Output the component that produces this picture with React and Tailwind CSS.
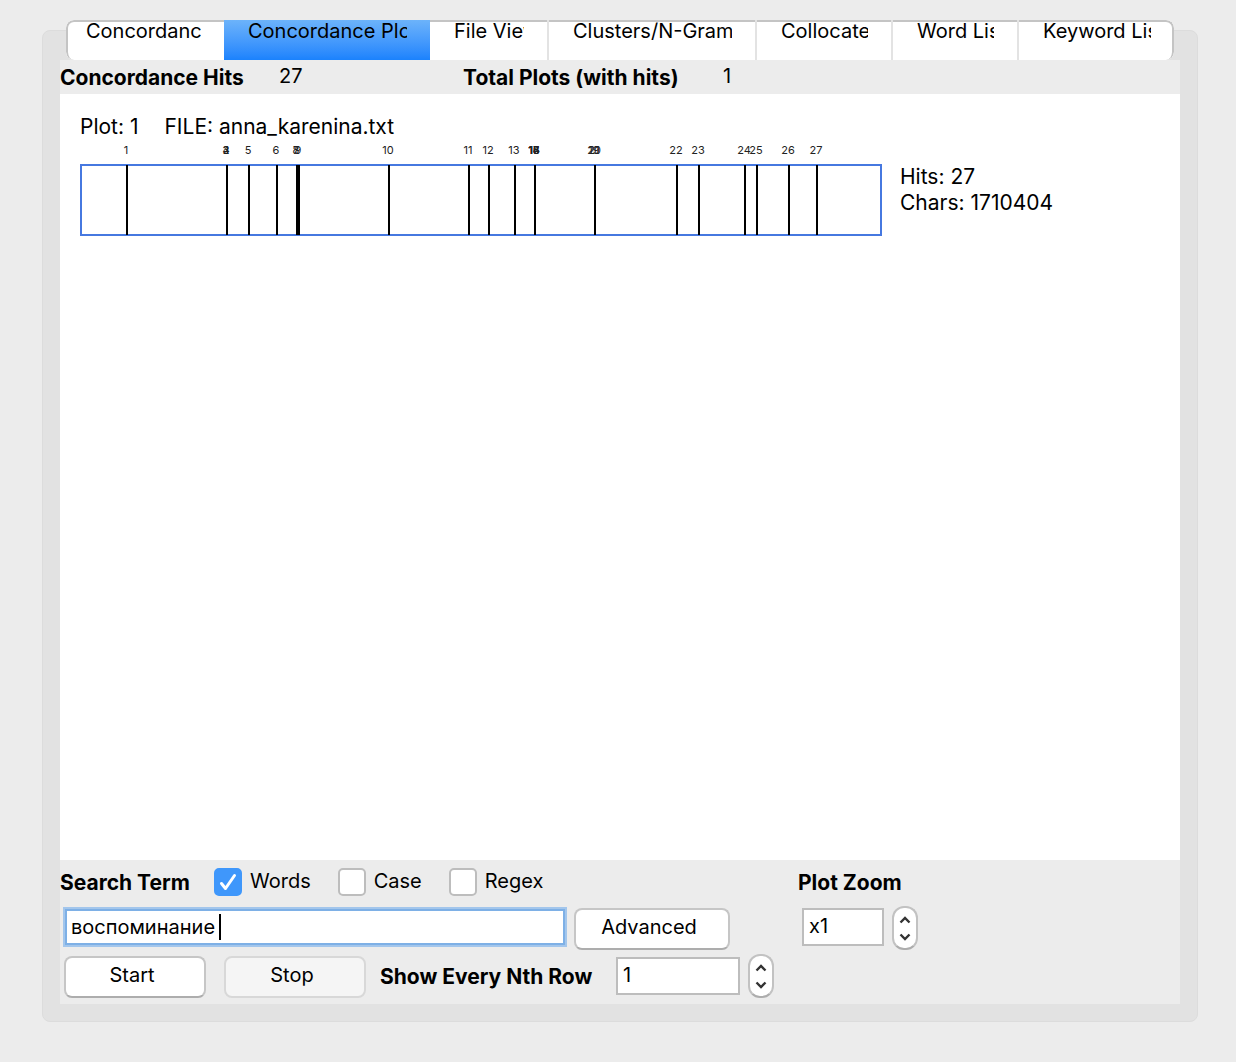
import React from "react";

const TABS = [
  { label: "Concordance", box: "grow-158 basis-[158px] pl-[20px]" },
  { label: "Concordance Plot", box: "grow-206 basis-[206px]" },
  { label: "File View", box: "grow-119 basis-[119px]" },
  { label: "Clusters/N-Grams", box: "grow-208 basis-[208px]" },
  { label: "Collocates", box: "grow-136 basis-[136px]" },
  { label: "Word List", box: "grow-126 basis-[126px]" },
  { label: "Keyword List", box: "grow-155 basis-[155px]" },
];

// Hit number and its offset inside the plot box.
const HITS = [
  [1, 46], [2, 146], [3, 146], [4, 146], [5, 168], [6, 196], [7, 216], [8, 216],
  [9, 218], [10, 308], [11, 388], [12, 408], [13, 434], [14, 454], [15, 454],
  [16, 454], [17, 454], [18, 454], [19, 514], [20, 514], [21, 514], [22, 596],
  [23, 618], [24, 664], [25, 676], [26, 708], [27, 736],
];

function Tabs({ active }) {
  return (
    <div
      role="tablist"
      className="relative -mt-[11px] mx-[6px] flex h-[40px] overflow-hidden rounded-[8px] bg-white"
    >
      <div className="pointer-events-none absolute inset-0 rounded-[8px] border-2 border-b-0 border-[#c4c4c4]" />
      {TABS.map((tab, i) => {
        const on = i === active;
        return (
          <button
            key={tab.label}
            role="tab"
            aria-selected={on}
            className={`relative flex min-w-0 items-start pr-[23px] ${i === 0 ? "" : "pl-[24px]"} ${
              on
                ? "bg-linear-to-b from-[#6cb3fa] to-[#1a82fd]"
                : i > 1 && i < TABS.length - 1
                ? "border-r-2 border-[#e3e3e3]"
                : ""
            } ${tab.box}`}
          >
            <span className="block min-w-0 flex-1 overflow-hidden text-left leading-[22px] whitespace-nowrap">
              {tab.label}
            </span>
          </button>
        );
      })}
    </div>
  );
}

function Plot() {
  return (
    <svg width="802" height="94" viewBox="0 0 802 94" role="img" aria-label="Concordance plot" className="block shrink-0">
      <rect x="1" y="23" width="800" height="70" fill="white" stroke="#4678e0" strokeWidth="2" />
      {HITS.map(([n, x]) => (
        <g key={n}>
          <rect x={x} y="23" width="2" height="70" fill="black" />
          <text x={x} y="12" textAnchor="middle" fontSize="11" fill="#222">
            {n}
          </text>
        </g>
      ))}
    </svg>
  );
}

function Check({ label, checked }) {
  return (
    <label className="flex items-center gap-[8px]">
      <span className="relative flex h-[28px] w-[28px]">
        <input
          type="checkbox"
          defaultChecked={checked}
          className="peer h-[28px] w-[28px] appearance-none rounded-[5px] border-2 border-[#bdbdbd] bg-white checked:border-[#3f97fb] checked:bg-[#3f97fb]"
        />
        <svg viewBox="0 0 28 28" className="pointer-events-none absolute inset-0 hidden peer-checked:block" fill="none" stroke="white" strokeWidth="3" strokeLinecap="round" strokeLinejoin="round">
          <path d="M7.500 15.500 L11.500 20.500 L20.500 7.500" />
        </svg>
      </span>
      <span className="-mt-[2px]">{label}</span>
    </label>
  );
}

function PushButton({ children, className, disabled }) {
  return (
    <button
      disabled={disabled}
      className={`h-[42px] rounded-[8px] border-2 pr-[6px] pb-[4px] ${
        disabled ? "border-[#d8d8d8] bg-[#f5f5f5]" : "border-[#c6c6c6] border-b-[#adadad] bg-white"
      } ${className}`}
    >
      {children}
    </button>
  );
}

function Stepper({ label }) {
  return (
    <div className="flex h-[44px] w-[26px] flex-col overflow-hidden rounded-[12px] border-2 border-[#c2c2c2] border-b-[#adadad] bg-white">
      <button aria-label={`Increase ${label}`} className="flex flex-1 items-end justify-center pb-[5px]">
        <svg width="12" height="8" viewBox="0 0 12 8" fill="none" stroke="#333" strokeWidth="2.400">
          <path d="M1.500 6.500 L6 2 L10.500 6.500" />
        </svg>
      </button>
      <button aria-label={`Decrease ${label}`} className="flex flex-1 items-start justify-center pt-[4px]">
        <svg width="12" height="8" viewBox="0 0 12 8" fill="none" stroke="#333" strokeWidth="2.400">
          <path d="M1.500 1.500 L6 6 L10.500 1.500" />
        </svg>
      </button>
    </div>
  );
}

const FIELD = "h-[38px] border-2 border-[#bdbdbd] bg-white px-[5px] pb-[2px] outline-none";

export default function App() {
  return (
    <div className="flex min-h-screen flex-col bg-[#ececec] pt-[30px] pr-[38px] pb-[40px] pl-[42px] font-['Inter','Liberation_Sans',sans-serif] text-[20px] leading-[26px] text-black">
      <main className="flex flex-1 flex-col rounded-[8px] border border-[#dcdcdc] bg-[#e2e2e2] px-[17px] pb-[17px]">
        <Tabs active={1} />

        <div className="flex h-[34px] items-center bg-[#ececec]">
          <div className="flex w-[403px]">
            <span className="w-[219px] pt-[2px] text-[21px] font-bold">Concordance Hits</span>
            <span>27</span>
          </div>
          <div className="flex">
            <span className="w-[260px] pt-[2px] text-[21px] font-bold">Total Plots (with hits)</span>
            <span>1</span>
          </div>
        </div>

        <section className="flex-1 bg-white px-[20px] pt-[20px] text-[21px]">
          <p className="flex gap-[26px]">
            <span>Plot: 1</span>
            <span>FILE: anna_karenina.txt</span>
          </p>
          <div className="mt-[2px] flex gap-[18px]">
            <Plot />
            <p className="pt-[22px]">
              Hits: 27
              <br />
              Chars: 1710404
            </p>
          </div>
        </section>

        <form className="flex h-[144px] bg-[#ececec]" onSubmit={(e) => e.preventDefault()}>
          <div className="w-[738px]">
            <div className="flex h-[46px] items-center">
              <label htmlFor="term" className="w-[154px] text-[21px] font-bold">
                Search Term
              </label>
              <div className="flex gap-[27px] pb-[2px]">
                <Check label="Words" checked />
                <Check label="Case" />
                <Check label="Regex" />
              </div>
            </div>
            <div className="flex h-[42px] items-center gap-[7px] pl-[3px]">
              <div className="flex h-[40px] w-[504px] items-center border-2 border-[#a3c6ec] bg-white outline-2 -outline-offset-4 outline-[#7eb0e6]">
                <div className="relative flex-1">
                  <input id="term" defaultValue="воспоминание" className="w-full bg-transparent px-[6px] outline-none" />
                  <span className="absolute top-0 left-[154px] h-[26px] w-[2px] bg-black" />
                </div>
              </div>
              <PushButton className="mt-[4px] w-[156px]">Advanced</PushButton>
            </div>
            <div className="flex h-[56px] items-center pl-[4px]">
              <PushButton className="mt-[2px] w-[142px]">Start</PushButton>
              <PushButton className="mt-[2px] ml-[18px] w-[142px]" disabled>
                Stop
              </PushButton>
              <label htmlFor="nth" className="ml-[14px] w-[236px] pt-[2px] text-[21px] font-bold">
                Show Every Nth Row
              </label>
              <input id="nth" defaultValue="1" className={`${FIELD} w-[124px]`} />
              <div className="ml-[8px]">
                <Stepper label="row step" />
              </div>
            </div>
          </div>
          <div>
            <div className="flex h-[46px] items-center">
              <label htmlFor="zoom" className="text-[21px] font-bold">
                Plot Zoom
              </label>
            </div>
            <div className="flex h-[42px] items-center pl-[4px]">
              <input id="zoom" defaultValue="x1" className={`${FIELD} w-[82px]`} />
              <div className="mt-[2px] ml-[8px]">
                <Stepper label="plot zoom" />
              </div>
            </div>
          </div>
        </form>
      </main>
    </div>
  );
}
